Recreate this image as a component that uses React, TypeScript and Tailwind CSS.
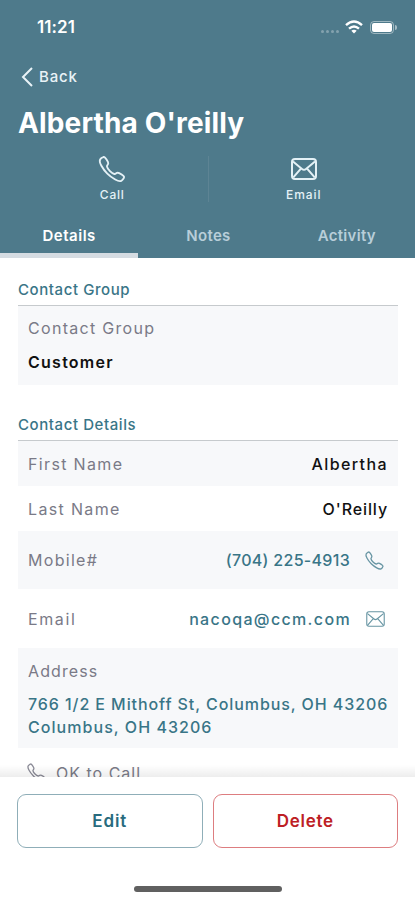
import type { ReactNode } from "react"
import { IoCallOutline } from "react-icons/io5"

const MailIcon = ({ className }: { className: string }) => {
    return <svg viewBox="0 0 26 22" fill="none" stroke="currentColor" strokeLinejoin="round" className={className}>
        <rect x="1" y="1" width="24" height="20" rx="3" />
        <path d="M2 3.5 11 11Q13 12.6 15 11L24 3.5M2.3 19.3 9.7 10.8M23.7 19.3 16.3 10.8" />
    </svg>
}

const StatusBar = () => {
    return <div className="flex h-[54px] items-center justify-between pl-[37px] pr-[18px]">
        <div className="text-[17px] font-semibold leading-none tracking-[0.1px]">11:21</div>
        <div className="flex items-center">
            <div className="mr-[6px] mt-[8px] flex gap-[2px] opacity-30">
                <div className="size-[3px] rounded-full bg-white"></div>
                <div className="size-[3px] rounded-full bg-white"></div>
                <div className="size-[3px] rounded-full bg-white"></div>
                <div className="size-[3px] rounded-full bg-white"></div>
            </div>
            <svg viewBox="0 0 18 14" className="mr-[7px] h-[14px] w-[18px]" fill="none" stroke="white" strokeWidth="2.4">
                <path d="M1 5.2Q9-2 17 5.2M4 8.6Q9 4.2 14 8.6" />
                <path d="M6.3 10.7Q9 8.6 11.7 10.7L9 13.6Z" fill="white" stroke="none" />
            </svg>
            <div className="h-[13px] w-[24px] rounded-[4px] border border-white/45 p-px">
                <div className="h-full w-[20px] rounded-[2px] bg-white"></div>
            </div>
            <div className="ml-px h-[5px] w-[2px] rounded-r-full bg-white/50"></div>
        </div>
    </div>
}

const SectionTitle = ({ children }: { children: ReactNode }) => {
    return <div className="border-b border-[#c6cacd] pb-[6px] text-[15px] font-medium leading-[18px] tracking-[0.58px] text-[#397587]">{children}</div>
}

const Header = () => {
    return <div className="h-[258px] shrink-0 bg-[#4e7a8b] text-white">
        <StatusBar />
        <div className="flex h-[45px] items-center pl-[21px] text-[#e9f3f7]">
            <svg viewBox="0 0 12 20" className="mr-[6px] h-[20px] w-[12px]" fill="none" stroke="currentColor" strokeWidth="2">
                <path d="M11 1 2 10 11 19" />
            </svg>
            <span className="pt-px text-[15px] font-medium tracking-[0.8px]">Back</span>
        </div>
        <div className="h-[49px] pl-[18px] pt-[8px] text-[28px] font-bold leading-[32px] tracking-[0.15px]">Albertha O'reilly</div>
        <div className="flex h-[65px] text-[12px] font-medium leading-none text-[#e4f1f6]">
            <div className="flex flex-1 flex-col items-center pl-[17px] pt-[6px]">
                <IoCallOutline className="size-[30px]" />
                <span className="mt-[5px] tracking-[0.8px]">Call</span>
            </div>
            <div className="mt-[8px] h-[46px] w-px bg-[#5d8494]"></div>
            <div className="flex flex-1 flex-col items-center pr-[16px] pt-[10px]">
                <MailIcon className="h-[22px] w-[26px] stroke-2" />
                <span className="mt-[9px] tracking-[0.9px]">Email</span>
            </div>
        </div>
        <div className="grid h-[45px] grid-cols-3 text-center text-[15px] font-semibold leading-[18px] text-[#b8ced9]">
            <div className="border-b-[5px] border-[#d5dce2] pt-[14px] tracking-[0.5px] text-white">Details</div>
            <div className="pl-[2px] pt-[14px] tracking-[0.3px]">Notes</div>
            <div className="pl-[2px] pt-[14px] tracking-[0.3px]">Activity</div>
        </div>
    </div>
}

const Details = () => {
    return <div className="h-[519px] shrink-0 overflow-hidden pl-[18px] pr-[17px] text-[16px] leading-[20px] text-[#7a7a87]">
        <div className="pt-[23px]">
            <SectionTitle>Contact Group</SectionTitle>
            <div className="h-[79px] bg-[#f7f8fa] px-[10px] pt-[12px]">
                <div className="tracking-[1.3px]">Contact Group</div>
                <div className="mt-[14px] font-semibold tracking-[1.25px] text-[#111]">Customer</div>
            </div>
        </div>
        <div className="pt-[31px]">
            <SectionTitle>Contact Details</SectionTitle>
            <div className="flex h-[45px] items-center justify-between bg-[#f7f8fa] px-[10px]">
                <span className="tracking-[1.35px]">First Name</span>
                <span className="font-medium tracking-[1.4px] text-[#111]">Albertha</span>
            </div>
            <div className="flex h-[45px] items-center justify-between px-[10px]">
                <span className="tracking-[1.35px]">Last Name</span>
                <span className="font-medium tracking-[0.9px] text-[#111]">O'Reilly</span>
            </div>
            <div className="flex h-[58px] items-center bg-[#f7f8fa] px-[10px]">
                <span className="tracking-[1.3px]">Mobile#</span>
                <span className="ml-auto font-medium tracking-[0.3px] text-[#397587]">(704) 225-4913</span>
                <IoCallOutline className="ml-[14px] mr-[3px] size-[21px] text-[#6795a3]" />
            </div>
            <div className="flex h-[59px] items-center px-[10px]">
                <span className="tracking-[1.6px]">Email</span>
                <span className="ml-auto font-medium tracking-[1.35px] text-[#397587]">nacoqa@ccm.com</span>
                <MailIcon className="ml-[15px] mr-[3px] h-[16px] w-[19px] stroke-[1.5px] text-[#6795a3]" />
            </div>
            <div className="h-[100px] bg-[#f7f8fa] px-[10px] pt-[13px]">
                <div className="tracking-[1.1px]">Address</div>
                <div className="mt-[12px] whitespace-nowrap font-medium leading-[23px] text-[#397587]">
                    <div className="tracking-[0.92px]">766 1/2 E Mithoff St, Columbus, OH 43206</div>
                    <div className="tracking-[1.05px]">Columbus, OH 43206</div>
                </div>
            </div>
            <div className="flex items-center pl-[8px] pt-[14px]">
                <IoCallOutline className="mr-[9px] size-[21px] text-[#8a8a96]" />
                <span className="tracking-[1px]">OK to Call</span>
            </div>
        </div>
    </div>
}

const Footer = () => {
    return <div className="relative h-[123px] shrink-0 bg-white px-[17px] pt-[17px] text-[17px] font-semibold">
        <div className="absolute inset-x-0 -top-[12px] h-[12px] bg-linear-to-b from-transparent to-black/7"></div>
        <div className="flex gap-[10px]">
            <button className="h-[54px] flex-1 rounded-[9px] border border-[#8faeb8] pt-[2px] tracking-[0.9px] text-[#286b7e]">Edit</button>
            <button className="h-[54px] flex-1 rounded-[9px] border border-[#dd7d80] pt-[2px] tracking-[0.7px] text-[#bd2024]">Delete</button>
        </div>
        <div className="ml-[117px] mt-[38px] h-[6px] w-[148px] rounded-full bg-[#606060]"></div>
    </div>
}

export default function App() {
    return <div className="flex h-[900px] w-[415px] flex-col overflow-hidden bg-white font-['Inter',sans-serif]">
        <Header />
        <Details />
        <Footer />
    </div>
}
